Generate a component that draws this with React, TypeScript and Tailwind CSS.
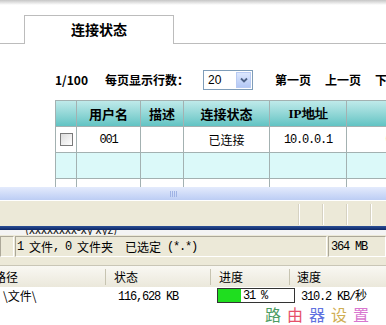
const cols = ['w-[21px]', 'w-[64px]', 'w-[43px]', 'w-[86px]', 'w-[77px]', 'w-[60px]'];

const TableRow = ({
  cells,
  className,
  height = 'h-[26px]',
}: {
  cells: React.ReactNode[];
  className: string;
  height?: string;
}) => (
  <div className={`flex ${height} ${className}`}>
    {cells.map((c, i) => (
      <div
        key={i}
        className={`${cols[i]} shrink-0 border-r border-b border-[#a3b1b1] flex items-center justify-center`}
      >
        {c}
      </div>
    ))}
  </div>
);

const Checkbox = () => (
  <div className="w-[13px] h-[13px] border border-[#7a7a7a] bg-gradient-to-br from-[#dcdcdc] to-white" />
);

// SimSun-like half-width digits: 6px per char
const mono = "font-['Liberation_Mono',monospace] text-[12px] tracking-[-1.2px] whitespace-pre";

const WebPanel = () => (
  <div className="h-[187px] overflow-hidden">
    <div className="h-[5px] bg-gradient-to-b from-[#c6c6c6] to-white" />
    <div className="mt-[10px] flex h-[29px]">
      <div className="w-[24px] border-b border-[#bcbcbc]" />
      <div className="w-[150px] border border-b-0 border-[#bcbcbc] flex items-center justify-center text-[14px] font-bold pb-[2px]">
        连接状态
      </div>
      <div className="flex-1 border-b border-[#bcbcbc]" />
    </div>

    <div className="mt-[26px] h-[20px] flex items-center pl-[55px] text-[12px] font-bold whitespace-nowrap">
      <span className="w-[50px] shrink-0">1/100</span>
      <span className="w-[98px] shrink-0">每页显示行数：</span>
      <div className="w-[50px] h-[20px] shrink-0 border border-[#7f9db9] bg-white flex items-center justify-between">
        <span className="pl-[4px] font-normal text-[12px] font-['Liberation_Sans',sans-serif]">20</span>
        <div className="w-[15px] h-[16px] mr-[1px] bg-gradient-to-b from-[#dce7fd] to-[#b4c8f5] border border-[#b9cbf3] flex items-center justify-center">
          <svg width="8" height="6" viewBox="0 0 8 6">
            <polyline points="1,1.5 4,4.5 7,1.5" fill="none" stroke="#4d6185" strokeWidth="1.8" />
          </svg>
        </div>
      </div>
      <span className="ml-[22px] w-[50px] shrink-0">第一页</span>
      <span className="w-[50px] shrink-0">上一页</span>
      <span className="shrink-0">下一页</span>
    </div>

    <div className="mt-[10px] ml-[55px] border-t border-l border-[#a3b1b1] w-[352px] text-[12px] whitespace-nowrap">
      <TableRow
        className="bg-gradient-to-b from-[#bfeaea] to-[#5cc2c2] font-bold text-[13px]"
        cells={['', '用户名', '描述', '连接状态', <span key="ip" className="font-['Liberation_Serif',serif] text-[13px]">IP地址</span>, '']}
      />
      <TableRow
        className="bg-white"
        cells={[
          <Checkbox key="cb" />,
          <span key="u" className={mono}>001</span>,
          '',
          '已连接',
          <span key="ip" className={mono}>10.0.0.1</span>,
          <span key="m" className={`${mono} pl-[30px]`}>00</span>,
        ]}
      />
      <TableRow className="bg-[#dbf9f9]" cells={['', '', '', '', '', '']} />
      <TableRow className="bg-white" cells={['', '', '', '', '', '']} />
    </div>
  </div>
);

const Explorer = () => (
  <div className="text-[12px] whitespace-nowrap">
    <div className="h-[13px] bg-gradient-to-b from-[#e4ebfc] to-[#bccdf4] flex items-center pl-[170px] gap-[1px]">
      {[0, 1, 2, 3].map((i) => (
        <div key={i} className="w-[1px] h-[6px] bg-[#f4f7ff] border-r border-[#9fb3e4]" />
      ))}
    </div>
    <div className="h-[26px] bg-[#ece9d8] border-t border-white flex items-end pb-[1px] pl-[298px] gap-[22px]">
      {[0, 1, 2, 3].map((i) => (
        <div key={i} className="w-[2px] h-[21px] border-l border-[#d6d2c2] border-r border-r-white" />
      ))}
    </div>
    <div className="h-[4px] bg-gradient-to-b from-[#2b4f97] to-[#0c2766]" />
    <div className="h-[5px] bg-[#f4f4f4] overflow-hidden pl-[25px]">
      <div className="mt-[-10px] text-[12px] text-[#222]">(xxxxxxxx-xy xyz)</div>
    </div>
    <div className="h-[30px] bg-[#ece9d8] flex gap-[1px] pt-[1px]">
      <div className="w-[14px] h-[21px] border border-[#aca899] border-r-white border-b-white" />
      <div className="w-[312px] h-[21px] border border-[#aca899] border-r-white border-b-white flex items-center pl-[1px] text-[12px]">
        <span className={mono}>1 </span>文件<span className={mono}>, 0 </span>文件夹
        <span className={mono}>  </span>已选定<span className={mono}> (*.*)</span>
      </div>
      <div className="flex-1 h-[21px] border border-[#aca899] border-r-white border-b-white flex items-center pl-[2px]">
        <span className={mono}>364 MB</span>
      </div>
    </div>
    <div className="h-[22px] border-t border-[#c9c6b6] bg-gradient-to-b from-[#f9f8f3] to-[#ebe8db] flex items-center text-[12px]">
      <div className="w-[111px] -ml-[6px] shrink-0">
        <span>路径</span>
      </div>
      <div className="w-[1px] h-[16px] bg-[#c7c4b1] shrink-0" />
      <div className="w-[104px] pl-[8px] shrink-0">状态</div>
      <div className="w-[1px] h-[16px] bg-[#c7c4b1] shrink-0" />
      <div className="w-[78px] pl-[8px] shrink-0">进度</div>
      <div className="w-[1px] h-[16px] bg-[#c7c4b1] shrink-0" />
      <div className="pl-[7px]">速度</div>
    </div>
    <div className="h-[17px] flex items-center bg-white leading-[14px]">
      <div className="w-[118px] pl-[3px] shrink-0">\文件\</div>
      <div className="w-[99px] shrink-0">
        <span className={mono}>116,628 KB</span>
      </div>
      <div className="w-[78px] h-[15px] shrink-0 border border-[#333] flex items-center">
        <div className="w-[23px] h-[13px] bg-[#1fde1f]" />
        <span className={`${mono} pl-[2px]`}>31 %</span>
      </div>
      <div className="pl-[6px]">
        <span className={mono}>310.2 KB/</span>秒
      </div>
    </div>
    <div className="mt-[2px] pl-[265px] flex gap-[6px] text-[16px] leading-[16px]">
      <span className="text-[#4c9c62]">路</span>
      <span className="text-[#e6506a]">由</span>
      <span className="text-[#6072e0]">器</span>
      <span className="text-[#cfae52]">设</span>
      <span className="text-[#d876cf]">置</span>
    </div>
  </div>
);

export default function App() {
  return (
    <div className="w-[386px] h-[325px] overflow-hidden bg-white text-black font-['Noto_Sans_CJK_SC',sans-serif]">
      <WebPanel />
      <Explorer />
    </div>
  );
}
